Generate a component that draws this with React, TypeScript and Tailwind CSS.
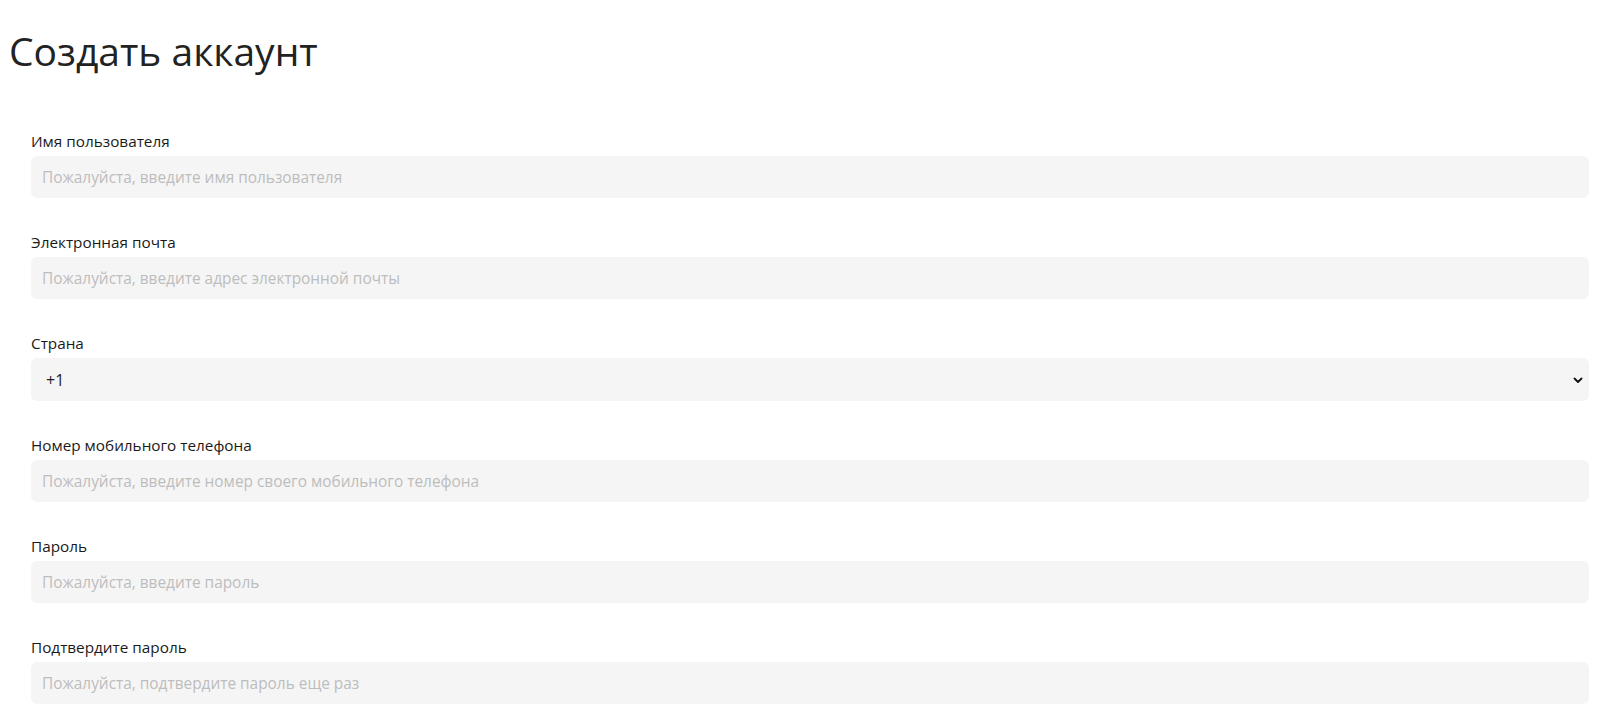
import React from 'react';

interface Field {
  id: string;
  label: string;
  placeholder?: string;
  type?: string;
}

const fields: Field[] = [
  { id: 'username', label: 'Имя пользователя', placeholder: 'Пожалуйста, введите имя пользователя' },
  { id: 'email', label: 'Электронная почта', placeholder: 'Пожалуйста, введите адрес электронной почты', type: 'email' },
  { id: 'country', label: 'Страна' },
  { id: 'phone', label: 'Номер мобильного телефона', placeholder: 'Пожалуйста, введите номер своего мобильного телефона', type: 'tel' },
  { id: 'password', label: 'Пароль', placeholder: 'Пожалуйста, введите пароль', type: 'password' },
  { id: 'confirm', label: 'Подтвердите пароль', placeholder: 'Пожалуйста, подтвердите пароль еще раз', type: 'password' },
];

export default function App() {
  return (
    <div className="min-h-screen bg-white font-['Open_Sans',sans-serif] text-[#1f1f1f]">
      <h1 className="pl-[9px] pt-[27px] text-[39px] leading-[48px] font-normal text-[#222]">Создать аккаунт</h1>

      <form className="mt-[55px] pl-[31px] pr-[11px]">
        {fields.map((f) => (
          <div key={f.id} className="mb-[33px]">
            <label htmlFor={f.id} className="block text-[15.3px] leading-[22px] mb-[4px] text-[#1a1a1a]">
              {f.label}
            </label>
            {f.id === 'country' ? (
              <div className="relative">
                <select
                  id={f.id}
                  className="block w-full h-[43px] appearance-none rounded-[6px] bg-[#f5f5f5] pl-[15px] pr-8 text-[16px] text-[#1f1f1f] outline-none"
                  defaultValue="+1"
                >
                  <option value="+1">+1</option>
                  <option value="+7">+7</option>
                </select>
                <svg
                  className="pointer-events-none absolute right-[5px] top-1/2 -translate-y-1/2"
                  width="12"
                  height="12"
                  viewBox="0 0 12 12"
                  fill="none"
                >
                  <path d="M2.5 4.5L6 8l3.5-3.5" stroke="#111" strokeWidth="1.8" strokeLinecap="round" strokeLinejoin="round" />
                </svg>
              </div>
            ) : (
              <input
                id={f.id}
                type={f.type || 'text'}
                placeholder={f.placeholder}
                className="block w-full h-[42px] rounded-[6px] bg-[#f5f5f5] px-[11px] text-[15.4px] text-[#1f1f1f] placeholder:text-[#bdbdbd] outline-none"
              />
            )}
          </div>
        ))}
      </form>
    </div>
  );
}
